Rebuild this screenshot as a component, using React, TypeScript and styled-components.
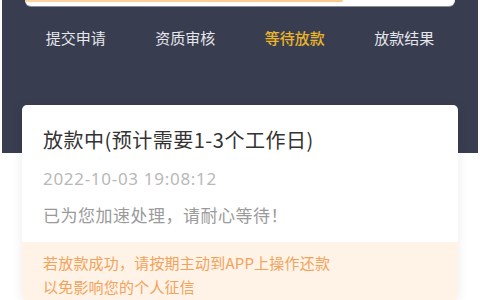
import React from "react";
import styled, { createGlobalStyle } from "styled-components";

const Global = createGlobalStyle`
  html, body { margin: 0; padding: 0; background: #ffffff; }
  body { font-family: "Noto Sans CJK SC", "Noto Sans", sans-serif; }
  * { box-sizing: border-box; }
`;

const Page = styled.div`
  width: 480px;
  height: 300px;
  overflow: hidden;
  background: #ffffff;
  display: flex;
  flex-direction: column;
`;

const Header = styled.div`
  margin: 0 2px;
  height: 153px;
  flex-shrink: 0;
  background: #393d50;
  display: flex;
  flex-direction: column;
`;

const TopCard = styled.div`
  margin: 0 23px;
  height: 6px;
  background: #ffffff;
  border-radius: 0 0 7px 7px;
  box-shadow: 0 1px 0 #8a8c98;
  overflow: hidden;
`;

const Progress = styled.div`
  height: 2px;
  background: linear-gradient(90deg, #ffd4a0, #ffc98c);
  border-radius: 0 2px 2px 0;
`;

const Steps = styled.div`
  display: grid;
  grid-template-columns: repeat(4, 1fr);
  padding: 21px 19px 0 19px;
`;

const Step = styled.div<{ $active?: boolean }>`
  text-align: center;
  font-size: 15px;
  line-height: 22px;
  color: ${(p) => (p.$active ? "#eab52a" : "#e6e7ec")};
  font-weight: ${(p) => (p.$active ? 500 : 400)};
`;

const Card = styled.div`
  margin: -48px 22px 0 22px;
  background: #ffffff;
  border-radius: 5px;
  box-shadow: 0 2px 12px rgba(0, 0, 0, 0.08);
  overflow: hidden;
  position: relative;
`;

const Body = styled.div`
  padding: 21px 21px 15px 21px;
  display: flex;
  flex-direction: column;
`;

const Title = styled.div`
  font-size: 20px;
  line-height: 28px;
  letter-spacing: 0.5px;
  color: #333333;
`;

const Time = styled.div`
  margin-top: 13px;
  font-size: 17px;
  line-height: 24px;
  letter-spacing: 0.7px;
  color: #b8b8b8;
  font-family: "Noto Sans", "Noto Sans CJK SC", sans-serif;
`;

const Message = styled.div`
  margin-top: 12px;
  font-size: 17px;
  line-height: 24px;
  letter-spacing: 0.5px;
  color: #9a9a9a;
`;

const Notice = styled.div`
  background: #fff3e8;
  padding: 9px 21px 12px 21px;
  font-size: 15px;
  line-height: 24px;
  letter-spacing: 0.2px;
  color: #f3a25a;
`;

export default function App() {
  return (
    <Page>
      <Global />
      <Header>
        <TopCard>
          <Progress style={{ width: "74%" }} />
        </TopCard>
        <Steps>
          <Step>提交申请</Step>
          <Step>资质审核</Step>
          <Step $active>等待放款</Step>
          <Step>放款结果</Step>
        </Steps>
      </Header>
      <Card>
        <Body>
          <Title>放款中(预计需要1-3个工作日)</Title>
          <Time>2022-10-03 19:08:12</Time>
          <Message>已为您加速处理，请耐心等待！</Message>
        </Body>
        <Notice>
          若放款成功，请按期主动到APP上操作还款
          <br />
          以免影响您的个人征信
        </Notice>
      </Card>
    </Page>
  );
}
